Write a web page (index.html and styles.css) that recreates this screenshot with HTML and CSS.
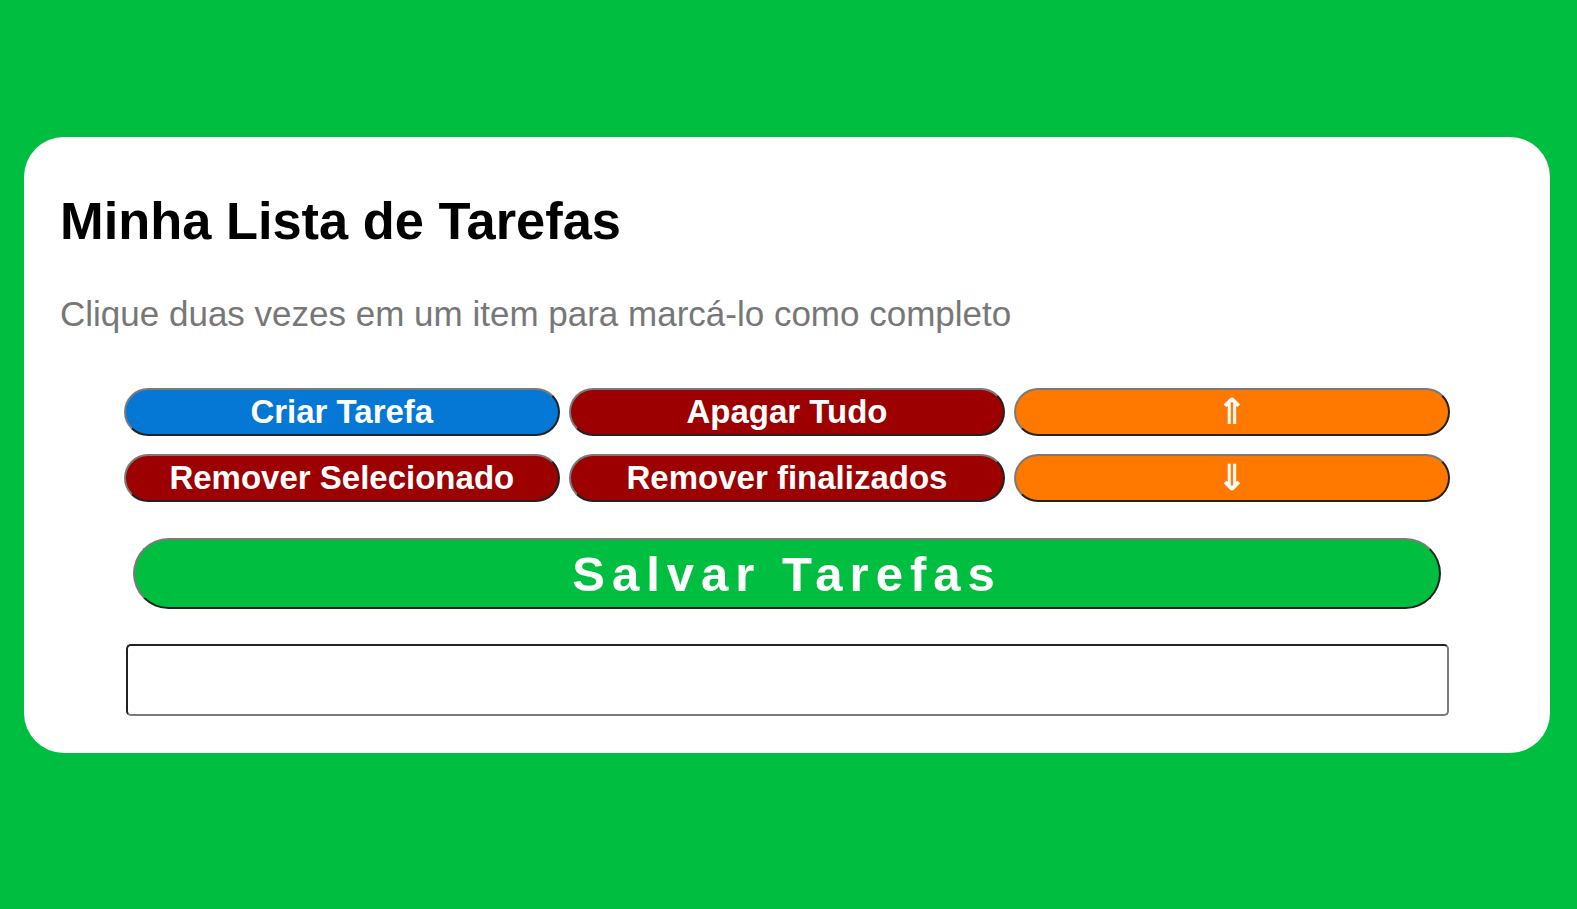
FILE: index.html
```html
<!DOCTYPE html>
<html lang="pt-BR">
<head>
<meta charset="utf-8">
<title>Minha Lista de Tarefas</title>
<link rel="stylesheet" href="styles.css">
</head>
<body>
  <main class="card">
    <h1 class="title">Minha Lista de Tarefas</h1>
    <p class="hint">Clique duas vezes em um item para marcá-lo como completo</p>
    <div class="actions">
      <button class="btn btn-blue">Criar Tarefa</button>
      <button class="btn btn-red">Apagar Tudo</button>
      <button class="btn btn-orange">⇑</button>
      <button class="btn btn-red">Remover Selecionado</button>
      <button class="btn btn-red">Remover finalizados</button>
      <button class="btn btn-orange">⇓</button>
    </div>
    <button class="btn-save">Salvar Tarefas</button>
    <ul class="task-list"></ul>
  </main>
</body>
</html>
```
FILE: styles.css
```css
html, body {
  margin: 0;
  padding: 0;
}
body {
  background: #00bf40;
  font-family: "Liberation Sans", Arial, sans-serif;
  min-height: 909px;
  padding-top: 137px;
  box-sizing: border-box;
}
.card {
  margin: 0 27px 0 24px;
  background: #fff;
  border-radius: 40px;
  padding: 54px 36px 37px 36px;
  display: flex;
  flex-direction: column;
  align-items: center;
}
.title {
  align-self: stretch;
  margin: 0;
  font-size: 52.4px;
  font-weight: bold;
  color: #000;
  line-height: 60px;
}
.hint {
  align-self: stretch;
  margin: 43px 0 0 0;
  font-size: 35px;
  line-height: 40px;
  color: #777;
}
.actions {
  margin-top: 54px;
  width: 100%;
  display: grid;
  grid-template-columns: repeat(3, 30%);
  justify-content: center;
  column-gap: 9px;
  row-gap: 18px;
}
.btn {
  height: 48px;
  border-radius: 24px;
  border: 2px solid;
  border-color: #7a7a7a #222 #222 #7a7a7a;
  color: #fff;
  font-family: "Liberation Sans", Arial, sans-serif;
  font-weight: bold;
  font-size: 33px;
  line-height: 40px;
  padding: 0;
  margin: 0;
  cursor: pointer;
}
.btn-blue { background: #0478d4; }
.btn-red { background: #9c0000; }
.btn-orange {
  background: #ff7800;
  font-family: "DejaVu Sans", sans-serif;
  font-size: 36px;
}
.btn-save {
  margin-top: 36px;
  width: 90%;
  height: 71px;
  border-radius: 36px;
  border: 2px solid;
  border-color: #7a7a7a #222 #222 #7a7a7a;
  background: #00bf40;
  color: #fff;
  font-family: "Liberation Sans", Arial, sans-serif;
  font-weight: bold;
  font-size: 49px;
  letter-spacing: 7px;
  padding: 1px 0 0 0;
  cursor: pointer;
}
.task-list {
  margin: 35px 0 0 0;
  padding: 0;
  list-style: none;
  width: 1323px;
  height: 72px;
  box-sizing: border-box;
  border: 2px solid;
  border-color: #222 #7a7a7a #7a7a7a #222;
  border-radius: 5px;
}
```
